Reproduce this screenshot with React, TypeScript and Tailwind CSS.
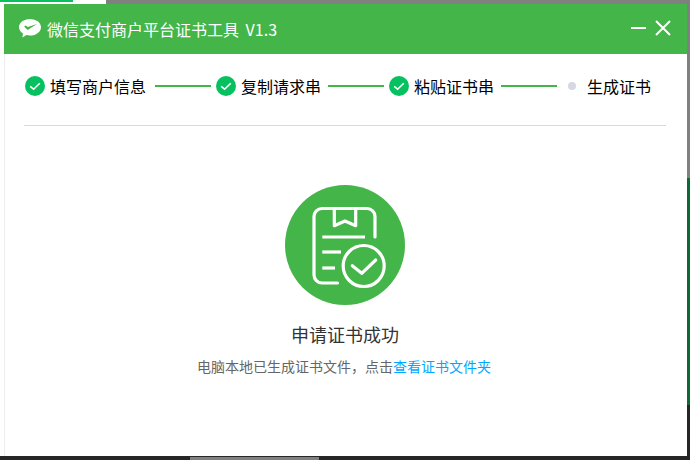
import React from 'react';

const FONT = "font-['Noto_Sans_CJK_SC','Liberation_Sans',sans-serif]";

const StepCheck: React.FC = () => (
  <svg width="20" height="20" viewBox="0 0 20 20" className="shrink-0">
    <circle cx="10" cy="10" r="10" fill="#07c160" />
    <path d="M5.2 10.4 L8.6 13.2 L14.8 7.2" fill="none" stroke="#fff" strokeWidth="1.6" />
  </svg>
);

const Step: React.FC<{ label: string; done?: boolean }> = ({ label, done = true }) => (
  <div className="flex items-center gap-[5px] text-base leading-5 text-black whitespace-nowrap">
    {done ? <StepCheck /> : <div className="w-[8px] h-[8px] rounded-full bg-[#d5d8e4] mr-[6px]" />}
    <span>{label}</span>
  </div>
);

const Line: React.FC<{ className: string }> = ({ className }) => (
  <div className={`h-[2px] w-[56px] bg-[#44b549] shrink-0 ${className}`} />
);

const WeChatLogo: React.FC = () => (
  <svg width="22" height="19" viewBox="0 0 22 19" className="-mt-[1px]">
    <path d="M11 0C5 0 0 3.6 0 8.2c0 2.6 1.6 4.8 4 6.300L3.400 18.500 7.400 16.100c1.100.3 2.400.4 3.600.4 6 0 11-3.700 11-8.300S17 0 11 0Z" fill="#fff" />
    <path d="M5.200 7.600 8.600 11 18 5 8.900 8.100 6.600 6.600Z" fill="#44b549" />
  </svg>
);

const SuccessIcon: React.FC = () => (
  <svg width="120" height="120" viewBox="0 0 120 120">
    <circle cx="60" cy="60" r="60" fill="#44b549" />
    <g fill="none" stroke="#fff" strokeWidth="3.2" strokeLinecap="round" strokeLinejoin="round">
      <path d="M90 52V31.500a8 8 0 0 0-8-8H37a8 8 0 0 0-8 8V90a8 8 0 0 0 8 8h15.500" />
      <path d="M49.300 23.500V40.700L60 36l10.700 4.700V23.500" />
      <path d="M37.300 52H80" strokeLinecap="butt" />
      <path d="M37.300 67H56" strokeLinecap="butt" />
      <path d="M37.300 83H50" strokeLinecap="butt" />
      <circle cx="78.700" cy="81" r="20.500" />
      <path d="M67.300 80.700 76.700 88.300 90.700 75" />
    </g>
  </svg>
);

export default function App() {
  return (
    <div className={`relative w-[690px] h-[460px] overflow-hidden bg-white ${FONT}`}>
      {/* what shows behind the tool window */}
      <div className="absolute left-0 top-0 w-[73px] h-[2px] bg-[#07c160]" />
      <div className="absolute left-[106px] right-0 top-0 h-[4px] bg-[#808080]" />
      <div className="absolute left-[687px] top-0 w-[3px] h-[178px] bg-[#808080]" />
      <div className="absolute left-[687px] top-[178px] w-[3px] h-[227px] bg-[#0b6b37]" />
      <div className="absolute left-[687px] top-[405px] w-[3px] h-[55px] bg-[#262626]" />
      <div className="absolute left-0 right-0 top-[456px] h-[4px] bg-[#262626]" />
      <div className="absolute left-[190px] w-[129px] top-[457px] h-[3px] bg-[#808080]" />

      <div className="absolute left-[4px] top-[4px] w-[683px] h-[452px] bg-white flex flex-col shadow-[inset_1px_0_0_#eeeeee]">
        <header className="h-[50px] bg-[#44b549] flex items-center pl-[15px] pr-[16px] text-white shrink-0">
          <WeChatLogo />
          <span className="ml-[6px] text-base leading-5">
            微信支付商户平台证书工具<span className="ml-[3px]"> V1.3</span>
          </span>
          <div className="ml-auto mb-[2px] flex items-center gap-[9px]">
            <div className="w-[15px] h-[2px] bg-white" />
            <svg width="16" height="16" viewBox="0 0 16 16">
              <path d="M1 1 15 15M15 1 1 15" stroke="#fff" strokeWidth="2" />
            </svg>
          </div>
        </header>

        <div className="ml-[20px] mr-[21px] pl-[1px] h-[72px] border-b border-[#d9d9d9] shrink-0 flex items-center pb-[8px]">
          <Step label="填写商户信息" />
          <Line className="ml-[9px] mr-[5px]" />
          <Step label="复制请求串" />
          <Line className="ml-[7px] mr-[5px]" />
          <Step label="粘贴证书串" />
          <Line className="ml-[7px] mr-[11px]" />
          <Step label="生成证书" done={false} />
        </div>

        <main className="flex flex-col items-center pt-[59px] pr-[1px]">
          <SuccessIcon />
          <h1 className="mt-[17px] text-lg leading-6 font-normal text-[#333333]">申请证书成功</h1>
          <p className="mt-[10px] mr-[2px] text-sm leading-5 text-[#666666]">
            电脑本地已生成证书文件，点击<a className="text-[#00a8ff]">查看证书文件夹</a>
          </p>
        </main>
      </div>
    </div>
  );
}
